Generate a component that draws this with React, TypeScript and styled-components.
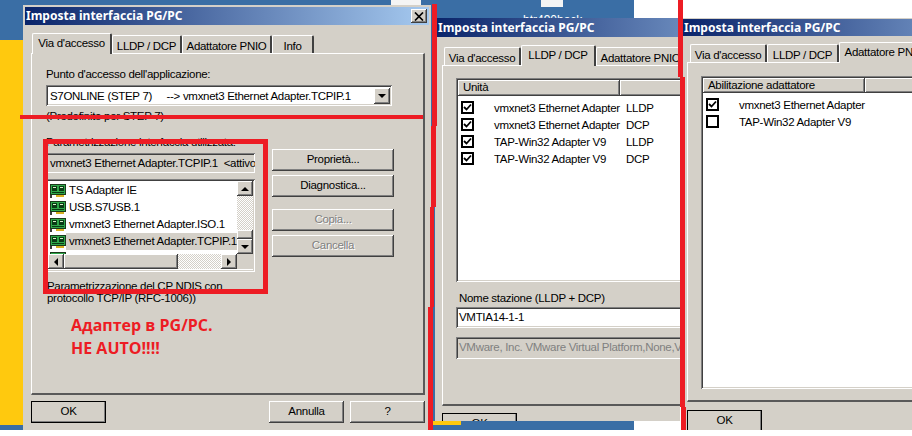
import React from "react";
import styled, { createGlobalStyle } from "styled-components";

const Global = createGlobalStyle`
  html, body { margin: 0; padding: 0; background: #fff; }
  body { font-family: "Liberation Sans", Arial, sans-serif; font-size: 11.5px; letter-spacing: -0.3px; color: #000; }
`;

const raised = `box-shadow: inset -1px -1px 0 #404040, inset 1px 1px 0 #fff, inset -2px -2px 0 #808080;`;
const sunken = `box-shadow: inset 1px 1px 0 #808080, inset -1px -1px 0 #fff, inset 2px 2px 0 #404040, inset -2px -2px 0 #d4d0c8;`;

const Desktop = styled.div`
  position: relative;
  width: 912px;
  height: 436px;
  overflow: hidden;
  background: #fff;
`;
const Patch = styled.div<{ $x: number; $y: number; $w: number; $h: number; $c: string }>`
  position: absolute;
  left: ${(p) => p.$x}px;
  top: ${(p) => p.$y}px;
  width: ${(p) => p.$w}px;
  height: ${(p) => p.$h}px;
  background: ${(p) => p.$c};
`;
const DesktopLabel = styled.div`
  position: absolute;
  left: 523px;
  top: 13px;
  color: #fff;
  font-size: 12px;
  letter-spacing: 0;
  line-height: 14px;
`;
const Win = styled.div<{ $x: number; $y: number; $w: number; $h: number; $pad: number }>`
  position: absolute;
  left: ${(p) => p.$x}px;
  top: ${(p) => p.$y}px;
  width: ${(p) => p.$w}px;
  height: ${(p) => p.$h}px;
  overflow: hidden;
  background: #d4d0c8;
  box-sizing: border-box;
  padding-top: ${(p) => p.$pad}px;
  display: flex;
  flex-direction: column;
`;
const Title = styled.div<{ $h: number; $ml: number; $mb: number }>`
  flex: none;
  width: 404px;
  margin: 0 0 ${(p) => p.$mb}px ${(p) => p.$ml}px;
  height: ${(p) => p.$h}px;
  background: linear-gradient(90deg, #0a246a, #a6caf0);
  color: #fff;
  font: bold 12px/18px "Noto Sans", sans-serif;
  letter-spacing: 0;
  padding-left: 1px;
  box-sizing: border-box;
  display: flex;
  align-items: center;
  justify-content: space-between;
  white-space: nowrap;
`;
const CloseBtn = styled.div`
  width: 16px;
  height: 14px;
  margin-right: 2px;
  background: #d4d0c8;
  ${raised}
  display: flex;
  align-items: center;
  justify-content: center;
`;
const TabStrip = styled.div<{ $ml: number }>`
  flex: none;
  display: flex;
  align-items: flex-end;
  height: 20px;
  margin-left: ${(p) => p.$ml}px;
  position: relative;
  z-index: 1;
  white-space: nowrap;
`;
const Tab = styled.div<{ $active: boolean; $w: number }>`
  flex: none;
  box-sizing: border-box;
  width: ${(p) => p.$w}px;
  height: ${(p) => (p.$active ? 21 : 18)}px;
  margin-bottom: ${(p) => (p.$active ? -1 : 0)}px;
  padding-top: ${(p) => (p.$active ? 2 : 3)}px;
  text-align: center;
  line-height: 14px;
  background: #d4d0c8;
  border-top: 1px solid #fff;
  border-left: 1px solid #fff;
  border-right: 2px solid #404040;
  border-radius: 2px 2px 0 0;
`;
const Page = styled.div<{ $ml: number; $w: number; $h: number; $pl: number; $pt: number }>`
  flex: none;
  box-sizing: border-box;
  margin-left: ${(p) => p.$ml}px;
  width: ${(p) => p.$w}px;
  height: ${(p) => p.$h}px;
  padding: ${(p) => p.$pt}px 0 0 ${(p) => p.$pl}px;
  border-top: 1px solid #fff;
  border-left: 1px solid #fff;
  border-right: 2px solid #595959;
  border-bottom: 2px solid #595959;
  background: #d4d0c8;
`;
const Footer = styled.div<{ $ml: number; $w: number; $mt: number }>`
  flex: none;
  display: flex;
  gap: 6px;
  margin: ${(p) => p.$mt}px 0 0 ${(p) => p.$ml}px;
  width: ${(p) => p.$w}px;
`;
const Spacer = styled.div`
  flex: 1;
`;
const Btn = styled.div<{ $primary?: boolean; $off?: boolean; $w?: number; $mt?: number }>`
  box-sizing: border-box;
  width: ${(p) => p.$w ?? 122}px;
  height: 22px;
  margin-top: ${(p) => p.$mt ?? 0}px;
  line-height: 20px;
  text-align: center;
  background: #d4d0c8;
  color: ${(p) => (p.$off ? "#808080" : "#000")};
  text-shadow: ${(p) => (p.$off ? "1px 1px 0 #fff" : "none")};
  ${raised}
  outline: ${(p) => (p.$primary ? "1px solid #000" : "none")};
  outline-offset: -1px;
`;
const Label = styled.div<{ $mt?: number }>`
  line-height: 14px;
  margin-top: ${(p) => p.$mt ?? 0}px;
  white-space: nowrap;
`;
const Combo = styled.div`
  box-sizing: border-box;
  width: 346px;
  height: 21px;
  margin-top: 4px;
  background: #fff;
  ${sunken}
  display: flex;
  align-items: center;
  padding: 0 2px 0 4px;
  white-space: pre;
`;
const ComboText = styled.div`
  flex: 1;
`;
const ArrowBtn = styled.div<{ $w?: number; $h?: number }>`
  flex: none;
  box-sizing: border-box;
  width: ${(p) => p.$w ?? 16}px;
  height: ${(p) => p.$h ?? 16}px;
  background: #d4d0c8;
  ${raised}
  display: flex;
  align-items: center;
  justify-content: center;
`;
const Tri = styled.div<{ $dir: "up" | "down" | "left" | "right" }>`
  width: 0;
  height: 0;
  border: 4px solid transparent;
  ${(p) =>
    p.$dir === "up"
      ? "border-bottom-color:#000;border-top-width:0;"
      : p.$dir === "down"
      ? "border-top-color:#000;border-bottom-width:0;"
      : p.$dir === "left"
      ? "border-right-color:#000;border-left-width:0;"
      : "border-left-color:#000;border-right-width:0;"}
`;
const Columns = styled.div`
  display: flex;
  gap: 17px;
  margin-top: 1px;
`;
const LeftCol = styled.div`
  width: 209px;
`;
const RightCol = styled.div`
  padding-top: 25px;
`;
const Readonly = styled.div`
  box-sizing: border-box;
  height: 20px;
  margin-top: 4px;
  ${sunken}
  line-height: 20px;
  padding: 0 3px 0 4px;
  overflow: hidden;
  white-space: pre;
`;
const ListBox = styled.div`
  box-sizing: border-box;
  height: 93px;
  margin-top: 6px;
  padding: 2px;
  background: #fff;
  ${sunken}
  display: grid;
  grid-template-columns: 189px 16px;
  grid-template-rows: 73px 15px;
`;
const ListRows = styled.div`
  overflow: hidden;
  padding: 1px 0 0 2px;
`;
const ListRow = styled.div`
  height: 17px;
  display: flex;
  align-items: center;
  white-space: nowrap;
`;
const RowText = styled.div<{ $sel?: boolean }>`
  flex: 1;
  height: 17px;
  line-height: 17px;
  padding-left: 3px;
  background: ${(p) => (p.$sel ? "#d4d0c8" : "transparent")};
`;
const VScroll = styled.div`
  display: flex;
  flex-direction: column;
`;
const HScroll = styled.div`
  display: flex;
`;
const Track = styled.div`
  flex: 1;
  background: repeating-conic-gradient(#fff 0 25%, #d4d0c8 0 50%) 0 0 / 2px 2px;
`;
const Thumb = styled.div<{ $w?: number; $h?: number }>`
  flex: none;
  box-sizing: border-box;
  width: ${(p) => (p.$w ? `${p.$w}px` : "auto")};
  height: ${(p) => (p.$h ? `${p.$h}px` : "auto")};
  background: #d4d0c8;
  ${raised}
`;
const Corner = styled.div`
  background: #d4d0c8;
`;
const Description = styled.div`
  margin: 8px 0 0 1px;
  line-height: 12px;
  white-space: nowrap;
`;
const ListView = styled.div<{ $h: number }>`
  box-sizing: border-box;
  width: 366px;
  height: ${(p) => p.$h}px;
  padding: 2px;
  background: #fff;
  ${sunken}
`;
const ListHead = styled.div<{ $h: number }>`
  display: flex;
  height: ${(p) => p.$h}px;
  margin-bottom: 3px;
`;
const HeadCell = styled.div<{ $w?: number }>`
  box-sizing: border-box;
  flex: ${(p) => (p.$w ? `0 0 ${p.$w}px` : 1)};
  background: #d4d0c8;
  padding-left: 5px;
  line-height: 15px;
  ${raised}
`;
const CheckRow = styled.div`
  display: grid;
  grid-template-columns: 33px 132px 1fr;
  align-items: center;
  height: 17px;
  padding-left: 3px;
  white-space: nowrap;
`;
const CheckBox = styled.div`
  box-sizing: border-box;
  width: 13px;
  height: 13px;
  border: 2px solid #000;
  background: #fff;
  display: flex;
`;
const StationLabel = styled.div`
  margin: 9px 0 0 3px;
  line-height: 14px;
`;
const Field = styled.div<{ $off?: boolean }>`
  box-sizing: border-box;
  width: 366px;
  height: ${(p) => (p.$off ? 22 : 21)}px;
  margin-top: ${(p) => (p.$off ? 9 : 2)}px;
  padding: 0 3px;
  line-height: 21px;
  white-space: nowrap;
  overflow: hidden;
  background: ${(p) => (p.$off ? "#d4d0c8" : "#fff")};
  color: ${(p) => (p.$off ? "#808080" : "#000")};
  ${sunken}
`;
const Slash = styled.div<{ $x: number; $y: number; $w: number; $h: number }>`
  position: absolute;
  left: ${(p) => p.$x}px;
  top: ${(p) => p.$y}px;
  width: ${(p) => p.$w}px;
  height: ${(p) => p.$h}px;
  background: #ed1c24;
  z-index: 5;
`;
const Frame = styled.div`
  position: absolute;
  left: 43px;
  top: 139px;
  width: 225px;
  height: 155px;
  box-sizing: border-box;
  border: 5px solid #ed1c24;
  z-index: 5;
`;
const Note = styled.div`
  position: absolute;
  left: 71px;
  top: 314px;
  color: #ed1c24;
  font: bold 16px/23px "Open Sans", sans-serif;
  letter-spacing: 0;
  white-space: nowrap;
  z-index: 5;
`;
const IconSvg = styled.svg`
  flex: none;
`;

const NetIcon = () => (
  <IconSvg width="16" height="14" viewBox="0 0 16 14">
    <rect x="0.5" y="0.5" width="15" height="10" fill="#2fa84a" stroke="#1a3a1a" />
    <rect x="2" y="2" width="5" height="5" fill="#0a3a14" />
    <rect x="3" y="3" width="3" height="1" fill="#d8f0c8" />
    <rect x="9" y="2" width="5" height="5" fill="#0a3a14" />
    <rect x="10" y="3" width="3" height="1" fill="#d8f0c8" />
    <rect x="2" y="8" width="12" height="1" fill="#0a3a14" />
    <rect x="6" y="11" width="8" height="2" fill="#d8b020" />
    <rect x="0" y="11" width="2" height="3" fill="#3a3a3a" />
  </IconSvg>
);
const Tick = () => (
  <svg width="9" height="9" viewBox="0 0 9 9">
    <path d="M1 4 L3.5 6.5 L8 1.5" fill="none" stroke="#000" strokeWidth="1.8" />
  </svg>
);
const X = () => (
  <svg width="10" height="9" viewBox="0 0 10 9">
    <path d="M1 0.5 L9 8.5 M9 0.5 L1 8.5" stroke="#000" strokeWidth="1.7" />
  </svg>
);

const tabLabels = ["Via d'accesso", "LLDP / DCP", "Adattatore PNIO", "Info"];

const Tabs = ({ active, ml, widths }: { active: number; ml: number; widths: number[] }) => (
  <TabStrip $ml={ml}>
    {tabLabels.map((t, i) => (
      <Tab key={t} $active={i === active} $w={widths[i]}>
        {t}
      </Tab>
    ))}
  </TabStrip>
);

const adapters = ["TS Adapter IE", "USB.S7USB.1", "vmxnet3 Ethernet Adapter.ISO.1", "vmxnet3 Ethernet Adapter.TCPIP.1", "vmxnet3 Ethernet Adapter.DCPIP.1"];

export default function App() {
  return (
    <Desktop>
      <Global />
      <Patch $x={0} $y={0} $w={680} $h={430} $c="#3a6ea5" />
      <Patch $x={0} $y={40} $w={23} $h={385} $c="#ffc90e" />
      <Patch $x={391} $y={0} $w={30} $h={5} $c="#f4f4f4" />
      <Patch $x={541} $y={0} $w={22} $h={7} $c="#f4f4f4" />
      <Patch $x={634} $y={0} $w={46} $h={18} $c="#fff" />
      <Patch $x={634} $y={421} $w={46} $h={9} $c="#fff" />
      <Patch $x={433} $y={421} $w={28} $h={4} $c="#ffc90e" />
      <DesktopLabel>htr490hack</DesktopLabel>

      <Win $x={23} $y={5} $w={408} $h={425} $pad={2}>
        <Title $h={18} $ml={2} $mb={8}>
          Imposta interfaccia PG/PC
          <CloseBtn>
            <X />
          </CloseBtn>
        </Title>
        <Tabs active={0} ml={9} widths={[80, 70, 90, 42]} />
        <Page $ml={8} $w={394} $h={342} $pl={14} $pt={13}>
          <Label>Punto d'accesso dell'applicazione:</Label>
          <Combo>
            <ComboText>{"S7ONLINE (STEP 7)     --> vmxnet3 Ethernet Adapter.TCPIP.1"}</ComboText>
            <ArrowBtn>
              <Tri $dir="down" />
            </ArrowBtn>
          </Combo>
          <Label $mt={3}>(Predefinito per STEP 7)</Label>
          <Columns>
            <LeftCol>
              <Label $mt={11}>Parametrizzazione interfaccia utilizzata:</Label>
              <Readonly>{"vmxnet3 Ethernet Adapter.TCPIP.1  <attivo"}</Readonly>
              <ListBox>
                <ListRows>
                  {adapters.map((a, i) => (
                    <ListRow key={a}>
                      <NetIcon />
                      <RowText $sel={i === 3}>{a}</RowText>
                    </ListRow>
                  ))}
                </ListRows>
                <VScroll>
                  <ArrowBtn $h={15}>
                    <Tri $dir="up" />
                  </ArrowBtn>
                  <Track />
                  <Thumb $h={9} />
                  <ArrowBtn $h={15}>
                    <Tri $dir="down" />
                  </ArrowBtn>
                </VScroll>
                <HScroll>
                  <ArrowBtn $h={15}>
                    <Tri $dir="left" />
                  </ArrowBtn>
                  <Thumb $w={114} />
                  <Track />
                  <ArrowBtn $h={15}>
                    <Tri $dir="right" />
                  </ArrowBtn>
                </HScroll>
                <Corner />
              </ListBox>
              <Description>
                Parametrizzazione del CP NDIS con
                <br />
                protocollo TCP/IP (RFC-1006))
              </Description>
            </LeftCol>
            <RightCol>
              <Btn>Proprietà...</Btn>
              <Btn $mt={4}>Diagnostica...</Btn>
              <Btn $mt={12} $off>Copia...</Btn>
              <Btn $mt={4} $off>Cancella</Btn>
            </RightCol>
          </Columns>
        </Page>
        <Footer $ml={8} $w={394} $mt={6}>
          <Btn $primary $w={75}>OK</Btn>
          <Spacer />
          <Btn $w={75}>Annulla</Btn>
          <Btn $w={75}>?</Btn>
        </Footer>
      </Win>

      <Win $x={435} $y={18} $w={245} $h={403} $pad={0}>
        <Title $h={19} $ml={2} $mb={8}>Imposta interfaccia PG/PC</Title>
        <Tabs active={1} ml={9} widths={[77, 75, 90, 42]} />
        <Page $ml={7} $w={394} $h={341} $pl={13} $pt={12}>
          <ListView $h={204}>
            <ListHead $h={16}>
              <HeadCell $w={162}>Unità</HeadCell>
              <HeadCell />
            </ListHead>
            {[
              ["vmxnet3 Ethernet Adapter", "LLDP"],
              ["vmxnet3 Ethernet Adapter", "DCP"],
              ["TAP-Win32 Adapter V9", "LLDP"],
              ["TAP-Win32 Adapter V9", "DCP"],
            ].map(([a, b]) => (
              <CheckRow key={a + b}>
                <CheckBox>
                  <Tick />
                </CheckBox>
                <div>{a}</div>
                <div>{b}</div>
              </CheckRow>
            ))}
          </ListView>
          <StationLabel>Nome stazione (LLDP + DCP)</StationLabel>
          <Field>VMTIA14-1-1</Field>
          <Field $off>VMware, Inc. VMware Virtual Platform,None,VMware-56 4d</Field>
        </Page>
        <Footer $ml={7} $w={394} $mt={7}>
          <Btn $primary $w={75}>OK</Btn>
        </Footer>
      </Win>

      <Win $x={683} $y={18} $w={229} $h={412} $pad={1}>
        <Title $h={17} $ml={0} $mb={6}>Imposta interfaccia PG/PC</Title>
        <Tabs active={2} ml={7} widths={[77, 72, 92, 42]} />
        <Page $ml={4} $w={394} $h={340} $pl={13} $pt={13}>
          <ListView $h={313}>
            <ListHead $h={15}>
              <HeadCell $w={162}>Abilitazione adattatore</HeadCell>
              <HeadCell />
            </ListHead>
            <CheckRow>
              <CheckBox>
                <Tick />
              </CheckBox>
              <div>vmxnet3 Ethernet Adapter</div>
            </CheckRow>
            <CheckRow>
              <CheckBox />
              <div>TAP-Win32 Adapter V9</div>
            </CheckRow>
          </ListView>
        </Page>
        <Footer $ml={4} $w={394} $mt={8}>
          <Btn $primary $w={75}>OK</Btn>
        </Footer>
      </Win>

      <Slash $x={20} $y={115} $w={403} $h={4} />
      <Slash $x={432} $y={4} $w={5} $h={122} />
      <Slash $x={431} $y={126} $w={5} $h={81} />
      <Slash $x={430} $y={207} $w={4} $h={100} />
      <Slash $x={428} $y={307} $w={5} $h={123} />
      <Slash $x={678} $y={0} $w={5} $h={77} />
      <Slash $x={680} $y={77} $w={5} $h={330} />
      <Slash $x={681} $y={407} $w={5} $h={23} />
      <Frame />
      <Note>
        Адаптер в PG/PC.
        <br />
        НЕ AUTO!!!!
      </Note>
    </Desktop>
  );
}
